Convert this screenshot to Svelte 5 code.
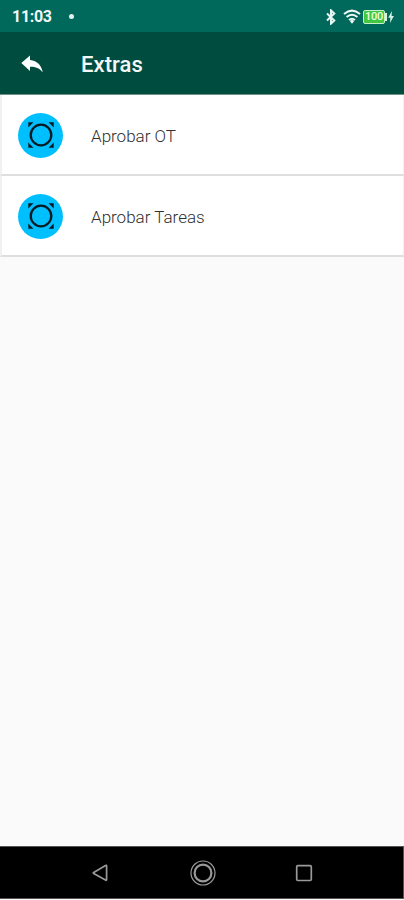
<script lang="ts">
  const items = [
    { id: "ot", label: "Aprobar OT" },
    { id: "tareas", label: "Aprobar Tareas" },
  ];
</script>

<div class="screen">
  <div class="status-bar">
    <span class="time">11:03</span>
    <span class="dot"></span>
    <div class="status-icons">
      <svg class="bluetooth" width="12" height="16" viewBox="0 0 12 16">
        <path d="M2 4.5 9.3 11.5 6 14.6V1.4L9.3 4.5 2 11.5" />
      </svg>
      <svg class="wifi" width="18" height="15" viewBox="0 0 18 15">
        <path d="M1 5Q9-1.8 17 5M3.6 8.1Q9 3.5 14.4 8.1M6.1 11Q9 8.4 11.9 11" />
        <path class="solid" d="M6.8 12Q9 10 11.2 12L9 14.7Z" />
      </svg>
      <div class="battery"><span>100</span></div>
      <svg class="bolt" width="6" height="12" viewBox="0 0 6 12">
        <path d="M3.9 0 .2 6.8H2.4L2 12 5.9 5H3.6Z" />
      </svg>
    </div>
  </div>

  <header class="app-bar">
    <button class="back" aria-label="Volver">
      <svg width="22" height="18" viewBox="0 0 22 18">
        <path d="M9 .5V5C16.5 5.8 20.2 10.3 21.8 17.3 18.5 13.3 14.6 11.7 9 11.8V16L.3 8Z" />
      </svg>
    </button>
    <h1>Extras</h1>
  </header>

  <main>
    {#each items as item (item.id)}
      <button class="card">
        <span class="avatar">
          <svg width="26" height="26" viewBox="0 0 26 26">
            <circle cx="13" cy="13" r="10.3" />
            <path d="M.3 .3H5.5L.3 5.5ZM20.5 .3H25.7V5.5ZM.3 20.5V25.7H5.5ZM25.7 20.5V25.7H20.5Z" />
          </svg>
        </span>
        <span class="label">{item.label}</span>
      </button>
    {/each}
  </main>

  <nav class="nav-bar">
    <svg width="26" height="26" viewBox="0 0 26 26">
      <path d="M18.6 6V19.6Q18.6 20.8 17.5 20.1L5.7 13.5Q4.8 13 5.7 12.4L17.5 5.6Q18.6 5 18.6 6Z" />
    </svg>
    <svg width="26" height="26" viewBox="0 0 26 26">
      <circle class="ring" cx="13" cy="13" r="12" />
      <circle class="core" cx="13" cy="13" r="8.4" />
    </svg>
    <svg width="26" height="26" viewBox="0 0 26 26">
      <rect x="5.7" y="5.7" width="14.6" height="14.8" rx="1.2" />
    </svg>
  </nav>
</div>

<style>
  :global(body) {
    margin: 0;
    background: #fafafa;
  }

  .screen {
    display: flex;
    flex-direction: column;
    box-sizing: border-box;
    width: 404px;
    height: 900px;
    padding-bottom: 1px;
    background: #fafafa;
    font-family: Roboto, sans-serif;
    overflow: hidden;
  }

  .status-bar {
    display: flex;
    align-items: center;
    flex-shrink: 0;
    box-sizing: border-box;
    height: 32px;
    padding: 1px 10px 0 12px;
    background: #00695c;
  }

  .time {
    width: 57px;
    color: #f0f7f5;
    font-size: 16px;
    font-weight: 700;
    line-height: 20px;
    letter-spacing: -0.3px;
  }

  .dot {
    width: 5px;
    height: 5px;
    border-radius: 50%;
    background: #e4f2ef;
  }

  .status-icons {
    display: flex;
    align-items: center;
    margin-left: auto;
  }

  .bluetooth {
    margin-right: 6px;
    fill: none;
    stroke: #e8f5f2;
    stroke-width: 2;
  }

  .wifi {
    margin-right: 2px;
    fill: none;
    stroke: #f0faf7;
    stroke-width: 2;
  }

  .wifi .solid {
    fill: #f0faf7;
    stroke: none;
  }

  .battery {
    position: relative;
    box-sizing: border-box;
    width: 22px;
    height: 14px;
    margin-right: 3px;
    border: 1px solid #c5f0c8;
    border-radius: 2px;
    background: #43c743;
    color: #e9ffe5;
    font-size: 11px;
    font-weight: 500;
    line-height: 12px;
    letter-spacing: -0.2px;
    text-align: center;
  }

  .battery::after {
    content: "";
    position: absolute;
    top: 2px;
    right: -3px;
    width: 2px;
    height: 8px;
    background: #d8f5dc;
  }

  .bolt {
    fill: #d5f3e4;
  }

  .app-bar {
    display: flex;
    align-items: center;
    flex-shrink: 0;
    box-sizing: border-box;
    height: 63px;
    padding: 2px 0 0 21px;
    border-bottom: 1px solid #6f918a;
    background: #004d40;
  }

  button {
    border: 0;
    font: inherit;
    text-align: left;
  }

  .back {
    display: flex;
    width: 60px;
    padding: 0;
    background: none;
  }

  .back svg {
    fill: #fff;
  }

  h1 {
    margin: 0;
    padding-top: 2px;
    color: #f4f8f7;
    font-size: 22px;
    font-weight: 500;
    line-height: 28px;
    letter-spacing: 0.1px;
  }

  main {
    flex: 1;
  }

  .card {
    display: flex;
    align-items: center;
    box-sizing: border-box;
    width: 100%;
    height: 81px;
    padding: 1px 0 0 16px;
    border: 2px solid #f1f1f1;
    border-width: 0 1px 2px 2px;
    border-bottom-color: #dedede;
    background: #fff;
  }

  .avatar {
    display: flex;
    align-items: center;
    justify-content: center;
    width: 45px;
    height: 45px;
    margin-right: 28px;
    border-radius: 50%;
    background: #00bfff;
  }

  .avatar circle {
    fill: none;
    stroke: #061a22;
    stroke-width: 2.3;
  }

  .avatar path {
    fill: #061a22;
  }

  .label {
    padding-top: 1px;
    color: #303030;
    font-size: 17px;
    font-weight: 300;
    line-height: 24px;
  }

  .nav-bar {
    display: flex;
    align-items: center;
    justify-content: space-between;
    flex-shrink: 0;
    box-sizing: border-box;
    height: 53px;
    padding: 0 86px 0 88px;
    border: 1px solid #555;
    border-left: 0;
    background: #000;
  }

  .nav-bar svg {
    fill: none;
    stroke: #999;
    stroke-width: 1.7;
  }

  .nav-bar .ring {
    stroke-width: 1.2;
  }

  .nav-bar .core {
    stroke-width: 2.2;
  }
</style>
